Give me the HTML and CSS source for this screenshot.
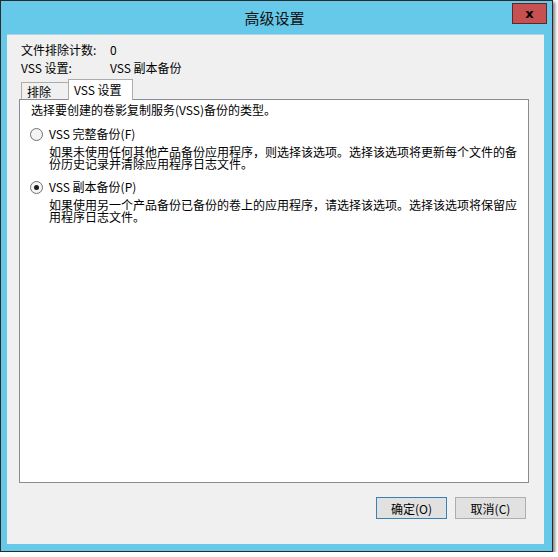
FILE: index.html
```html
<!DOCTYPE html>
<html lang="zh-CN">
<head>
    <meta charset="UTF-8">
    <title>高级设置</title>
    <link rel="stylesheet" href="styles.css">
</head>
<body>
    <div class="window">
        <div class="titlebar">
            <span class="title">高级设置</span>
            <button class="close">x</button>
        </div>
        <div class="content">
            <div class="info">
                <div class="info-row"><span class="label">文件排除计数:</span><span>0</span></div>
                <div class="info-row"><span class="label">VSS 设置:</span><span>VSS 副本备份</span></div>
            </div>

            <div class="tabs">
                <div class="tab">排除</div>
                <div class="tab active">VSS 设置</div>
            </div>
            <div class="tab-panel">
                <p class="intro">选择要创建的卷影复制服务(VSS)备份的类型。</p>

                <div class="option">
                    <label class="radio-row"><span class="radio"></span>VSS 完整备份(F)</label>
                    <p class="desc">如果未使用任何其他产品备份应用程序，则选择该选项。选择该选项将更新每个文件的备<br>份历史记录并清除应用程序日志文件。</p>
                </div>

                <div class="option">
                    <label class="radio-row"><span class="radio checked"></span>VSS 副本备份(P)</label>
                    <p class="desc">如果使用另一个产品备份已备份的卷上的应用程序，请选择该选项。选择该选项将保留应<br>用程序日志文件。</p>
                </div>
            </div>

            <div class="buttons">
                <button class="btn default">确定(O)</button>
                <button class="btn">取消(C)</button>
            </div>
        </div>
    </div>
</body>
</html>
```

FILE: styles.css
```css
body {
    margin: 0;
    background: #fff;
    font-family: 'Noto Sans CJK SC', 'Noto Sans', sans-serif;
    font-size: 12px;
    color: #000;
}
.window {
    width: 551px;
    height: 550px;
    border: 1px solid #2a2a2a;
    background: #66c9e9;
    box-shadow: 2px 2px 3px rgba(0, 0, 0, 0.5);
    display: flex;
    flex-direction: column;
}
.titlebar {
    position: relative;
    height: 33px;
    display: flex;
    align-items: center;
    justify-content: center;
}
.title {
    font-size: 15px;
    color: #111;
    margin-left: -4px;
}
.close {
    position: absolute;
    top: 2px;
    right: 5px;
    width: 35px;
    height: 21px;
    background: #c75050;
    border: 1px solid #5a2a2a;
    color: #000;
    font-family: 'DejaVu Sans', sans-serif;
    font-weight: bold;
    font-size: 13px;
    line-height: 14px;
    padding: 0;
}
.content {
    margin: 0 8px 7px 6px;
    flex: 1;
    background: #f0f0f0;
    border-top: 1px solid #a8d4e4;
    display: flex;
    flex-direction: column;
}
.info {
    padding: 6px 0 0 14px;
}
.info-row {
    display: flex;
    line-height: 18px;
}
.label {
    width: 89px;
}
.tabs {
    display: flex;
    align-items: flex-end;
    margin: 2px 0 0 14px;
    height: 20px;
}
.tab {
    height: 16px;
    padding-left: 5px;
    width: 41px;
    border: 1px solid #acacac;
    border-bottom: none;
    background: #f0f0f0;
    line-height: 17px;
}
.tab.active {
    height: 20px;
    width: 58px;
    background: #fff;
    line-height: 19px;
    margin-left: -1px;
    position: relative;
    bottom: -1px;
}
.tab-panel {
    margin-left: 12px;
    width: 508px;
    height: 382px;
    background: #fff;
    border: 1px solid #898c95;
}
.intro {
    margin: 3px 0 0 11px;
    line-height: 14px;
}
.option {
    margin: 10px 0 0 10px;
}
.radio-row {
    display: flex;
    align-items: center;
    line-height: 14px;
}
.radio {
    width: 11px;
    height: 11px;
    border: 1px solid #707070;
    border-radius: 50%;
    background: #f4f4f4;
    margin-right: 6px;
    display: flex;
    align-items: center;
    justify-content: center;
}
.radio.checked::after {
    content: "";
    width: 5px;
    height: 5px;
    border-radius: 50%;
    background: #1a1a1a;
}
.desc {
    margin: 5px 0 0 19px;
    line-height: 12px;
}
.buttons {
    display: flex;
    justify-content: flex-end;
    gap: 8px;
    margin: 14px 18px 0 0;
}
.btn {
    width: 71px;
    height: 22px;
    border: 1px solid #adadad;
    background: #e1e1e1;
    font-family: inherit;
    font-size: 12px;
    color: #000;
    padding: 0;
}
.btn.default {
    border-color: #3c7fb1;
}
```
